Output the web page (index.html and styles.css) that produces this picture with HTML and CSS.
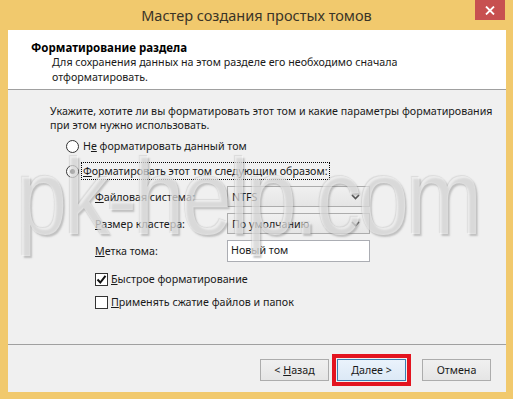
FILE: index.html
```html
<!DOCTYPE html>
<html lang="ru">
<head>
    <meta charset="UTF-8">
    <meta name="viewport" content="width=device-width, initial-scale=1.0">
    <title>Мастер создания простых томов</title>
    <link rel="stylesheet" href="styles.css">
</head>
<body>
    <div class="window">
        <div class="titlebar">
            <span></span>
            <span class="title">Мастер создания простых томов</span>
            <button class="close">
                <svg width="10" height="9" viewBox="0 0 10 9"><path d="M1 0.5 L9 8.5 M9 0.5 L1 8.5" stroke="#fff" stroke-width="1.8" fill="none"/></svg>
            </button>
        </div>
        <div class="client">
            <div class="header">
                <div class="header-title">Форматирование раздела</div>
                <div class="header-sub">Для сохранения данных на этом разделе его необходимо сначала<br>отформатировать.</div>
            </div>
            <div class="content">
                <p class="intro">Укажите, хотите ли вы форматировать этот том и какие параметры форматирования<br>при этом нужно использовать.</p>

                <div class="radio-row">
                    <span class="radio"></span>
                    <span class="radio-label">Н<u>е</u> форматировать данный том</span>
                </div>
                <div class="radio-row">
                    <span class="radio checked"></span>
                    <span class="radio-label focused"><u>Ф</u>орматировать этот том следующим образом:</span>
                </div>

                <div class="options">
                    <span class="opt-label"><u>Ф</u>айловая система:</span>
                    <div class="select">NTFS<svg class="chevron" width="9" height="6" viewBox="0 0 9 6"><path d="M1 1 L4.5 4.5 L8 1" stroke="#555" stroke-width="1.6" fill="none"/></svg></div>

                    <span class="opt-label"><u>Р</u>азмер кластера:</span>
                    <div class="select">По умолчанию<svg class="chevron" width="9" height="6" viewBox="0 0 9 6"><path d="M1 1 L4.5 4.5 L8 1" stroke="#555" stroke-width="1.6" fill="none"/></svg></div>

                    <span class="opt-label"><u>М</u>етка тома:</span>
                    <div class="textbox">Новый том</div>
                </div>

                <div class="check-row first">
                    <span class="checkbox"><svg width="11" height="11" viewBox="0 0 11 11"><path d="M1.5 5.5 L4.3 8.5 L9.5 1.8" stroke="#111" stroke-width="2" fill="none"/></svg></span>
                    <span><u>Б</u>ыстрое форматирование</span>
                </div>
                <div class="check-row">
                    <span class="checkbox"></span>
                    <span><u>П</u>рименять сжатие файлов и папок</span>
                </div>
            </div>
            <div class="footer">
                <button class="btn">&lt; <u>Н</u>азад</button>
                <button class="btn default"><u>Д</u>алее &gt;</button>
                <button class="btn cancel">Отмена</button>
            </div>
        </div>
        <div class="watermark">pk-help.com</div>
    </div>
</body>
</html>
```

FILE: styles.css
```css
body {
    margin: 0;
    padding: 0;
    font-family: "Noto Sans", sans-serif;
    font-size: 10.7px;
    color: #1a1a1a;
}
.window {
    position: relative;
    width: 513px;
    height: 399px;
    background: #f1c96d;
    display: flex;
    flex-direction: column;
    overflow: hidden;
}
.titlebar {
    height: 30px;
    display: grid;
    grid-template-columns: 1fr auto 1fr;
}
.title {
    font-size: 14.5px;
    line-height: 30px;
    color: #3a3427;
}
.close {
    justify-self: end;
    align-self: start;
    width: 30px;
    height: 20px;
    margin-right: 8px;
    border: none;
    padding: 0;
    background: #c75050;
    display: flex;
    align-items: center;
    justify-content: center;
}
.client {
    flex: 1;
    margin: 0 7px 7px 8px;
    display: flex;
    flex-direction: column;
}
.header {
    height: 60px;
    background: #fff;
    border-bottom: 1px solid #a0a0a0;
    box-sizing: border-box;
    padding: 10px 0 0 23px;
    line-height: 15px;
}
.header-title {
    font-weight: bold;
    font-size: 11.5px;
    color: #000;
}
.header-sub {
    padding-left: 21px;
}
.content {
    height: 255px;
    box-sizing: border-box;
    background: #f0f0f0;
    border-bottom: 1px solid #a0a0a0;
    padding: 14px 0 0 42px;
}
.intro {
    margin: 0 0 4px;
    line-height: 14px;
}
.radio-row {
    height: 20px;
    display: flex;
    align-items: center;
    margin-left: 16px;
    margin-bottom: 5px;
}
.radio {
    width: 11px;
    height: 11px;
    border: 1px solid #333;
    border-radius: 50%;
    background: #fff;
    margin-right: 2px;
    display: flex;
    align-items: center;
    justify-content: center;
}
.radio.checked::after {
    content: "";
    width: 5px;
    height: 5px;
    border-radius: 50%;
    background: #222;
}
.radio-label {
    padding: 1px 1px;
    border: 1px solid transparent;
}
.radio-label.focused {
    border: 1px dotted #000;
}
.options {
    display: grid;
    grid-template-columns: 132px 143px;
    grid-auto-rows: 21px;
    row-gap: 6px;
    align-items: center;
    margin: 1px 0 0 45px;
}
.select {
    height: 21px;
    box-sizing: border-box;
    border: 1px solid #acacac;
    background: linear-gradient(#f0f0f0, #e5e5e5);
    padding: 0 4px;
    display: flex;
    align-items: center;
    justify-content: space-between;
}
.chevron {
    margin-right: 5px;
}
.textbox {
    height: 22px;
    box-sizing: border-box;
    border: 1px solid #abadb3;
    background: #fff;
    padding: 2px 3px;
}
.check-row {
    height: 20px;
    display: flex;
    align-items: center;
    margin-left: 45px;
    margin-top: 3px;
}
.check-row.first {
    margin-top: 8px;
}
.checkbox {
    width: 11px;
    height: 11px;
    border: 1px solid #333;
    background: #fff;
    margin-right: 3px;
    display: flex;
    align-items: center;
    justify-content: center;
}
.footer {
    flex: 1;
    background: #f0f0f0;
    display: flex;
    justify-content: flex-end;
    align-items: flex-start;
    padding: 14px 15px 0 0;
}
.btn {
    width: 69px;
    height: 22px;
    font-family: "Noto Sans", sans-serif;
    font-size: 10.7px;
    color: #1a1a1a;
    border: 1px solid #acacac;
    background: linear-gradient(#f0f0f0, #e5e5e5);
    padding: 0;
    margin-left: 8px;
}
.btn.default {
    border-color: #3c7fb1;
    background: linear-gradient(#eaf3fc, #dce9f6);
    outline: 4px solid #e3141f;
    outline-offset: 1px;
}
.btn.cancel {
    margin-left: 16px;
}
.watermark {
    position: absolute;
    left: 16px;
    top: 143px;
    white-space: nowrap;
    font-family: "Liberation Sans", sans-serif;
    font-size: 108px;
    line-height: 108px;
    letter-spacing: -4px;
    transform: scaleX(0.85);
    transform-origin: left top;
    color: rgba(255, 255, 255, 0.5);
    text-shadow: 2px 2px 2px rgba(120, 120, 120, 0.4), -1px -1px 1px rgba(170, 170, 170, 0.3);
    pointer-events: none;
}
```
